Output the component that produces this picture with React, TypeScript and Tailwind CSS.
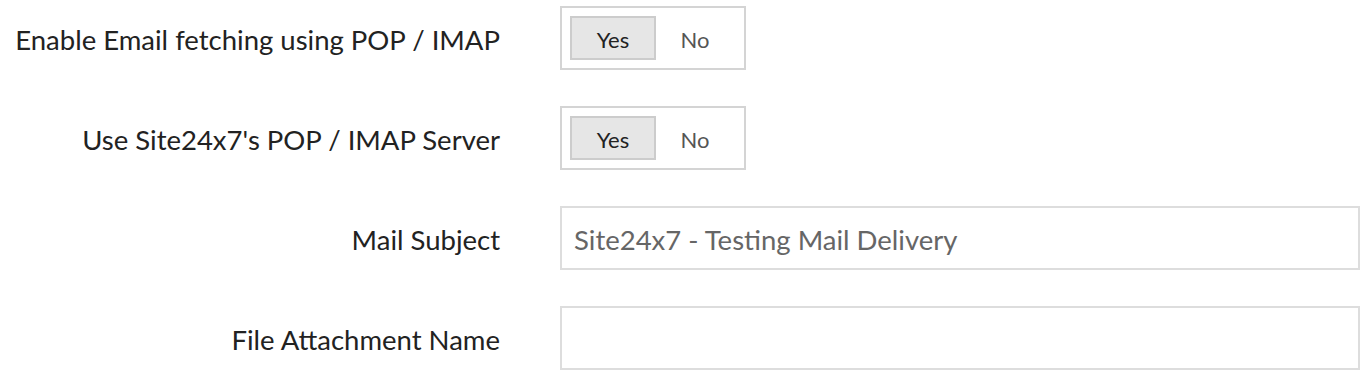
import React, { useState } from 'react';

const Toggle: React.FC<{ value: boolean; onChange: (v: boolean) => void }> = ({ value, onChange }) => (
  <div className="flex h-[64px] w-[186px] items-center border-2 border-[#d4d4d4] bg-white p-[8px]">
    <button
      onClick={() => onChange(true)}
      className={`flex h-[44px] w-[86px] items-center justify-center pt-[2px] text-[22px] text-[#222] ${
        value ? 'border-2 border-[#cccccc] bg-[#e6e6e6]' : 'border-2 border-transparent'
      }`}
    >
      Yes
    </button>
    <button
      onClick={() => onChange(false)}
      className={`flex h-[44px] w-[78px] items-center justify-center pt-[2px] text-[22px] text-[#555] ${
        !value ? 'border-2 border-[#cccccc] bg-[#e6e6e6]' : 'border-2 border-transparent'
      }`}
    >
      No
    </button>
  </div>
);

const Row: React.FC<{ label: string; children: React.ReactNode }> = ({ label, children }) => (
  <div className="flex items-center">
    <label className="w-[500px] shrink-0 pt-[4px] text-right text-[27.5px] text-[#222]">{label}</label>
    <div className="ml-[60px] flex-1">{children}</div>
  </div>
);

export default function App() {
  const [fetching, setFetching] = useState(true);
  const [useServer, setUseServer] = useState(true);
  const [subject, setSubject] = useState('Site24x7 - Testing Mail Delivery');
  const [attachment, setAttachment] = useState('');

  return (
    <div
      className="flex w-[1370px] flex-col gap-[36px] bg-white pr-[10px] pt-[6px]"
      style={{ fontFamily: 'Lato, "Open Sans", sans-serif' }}
    >
      <Row label="Enable Email fetching using POP / IMAP">
        <Toggle value={fetching} onChange={setFetching} />
      </Row>
      <Row label="Use Site24x7's POP / IMAP Server">
        <Toggle value={useServer} onChange={setUseServer} />
      </Row>
      <Row label="Mail Subject">
        <input
          value={subject}
          onChange={(e) => setSubject(e.target.value)}
          className="block h-[64px] w-full border-2 border-[#dddddd] px-[12px] pt-[2px] text-[27.5px] text-[#666] outline-none"
        />
      </Row>
      <Row label="File Attachment Name">
        <input
          value={attachment}
          onChange={(e) => setAttachment(e.target.value)}
          className="block h-[64px] w-full border-2 border-[#dddddd] px-[12px] pt-[2px] text-[27.5px] text-[#666] outline-none"
        />
      </Row>
    </div>
  );
}
